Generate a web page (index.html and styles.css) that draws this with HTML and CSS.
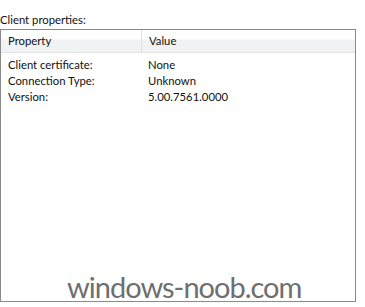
FILE: index.html
```html
<!DOCTYPE html>
<html lang="en">
  <head>
    <meta charset="UTF-8" />
    <title>Client properties</title>
    <link rel="stylesheet" href="styles.css">
  </head>
  <body>
    <div class="panel">
      <div class="caption">Client properties:</div>

      <div class="list">
        <div class="list-head">
          <div class="col col-prop">Property</div>
          <div class="col col-value">Value</div>
        </div>
        <div class="row">
          <div class="col col-prop">Client certificate:</div>
          <div class="col col-value">None</div>
        </div>
        <div class="row">
          <div class="col col-prop">Connection Type:</div>
          <div class="col col-value">Unknown</div>
        </div>
        <div class="row">
          <div class="col col-prop">Version:</div>
          <div class="col col-value">5.00.7561.0000</div>
        </div>
      </div>

      <div class="watermark">windows-noob.com</div>
    </div>
  </body>
</html>
```

FILE: styles.css
```css
body {
  margin: 0;
  padding: 0;
  background: #fff;
  color: #111;
  font-family: Lato, "Noto Sans", sans-serif;
  font-size: 11.3px;
}

.panel {
  position: relative;
  width: 365px;
  height: 307px;
  overflow: hidden;
}

.caption {
  padding-top: 12px;
  height: 17px;
  line-height: 16px;
}

.list {
  width: 354px;
  height: 271px;
  border: 1px solid #8a8a8a;
}

.list-head {
  display: flex;
  height: 22px;
  line-height: 22px;
  border-bottom: 1px solid #e2e2e2;
  background: linear-gradient(#ffffff 0%, #ffffff 40%, #f1f2f3 45%, #f1f2f3 100%);
}

.list-head .col-prop {
  border-right: 1px solid #e0e0e0;
}

.row {
  display: flex;
  height: 16px;
  line-height: 16px;
}

.list-head + .row {
  margin-top: 4px;
}

.col-prop {
  width: 133px;
  padding-left: 7px;
}

.col-value {
  padding-left: 7px;
}

.watermark {
  position: absolute;
  left: 67px;
  top: 271px;
  font-size: 29px;
  line-height: 32px;
  letter-spacing: -1px;
  color: #6f6f6f;
}
```
